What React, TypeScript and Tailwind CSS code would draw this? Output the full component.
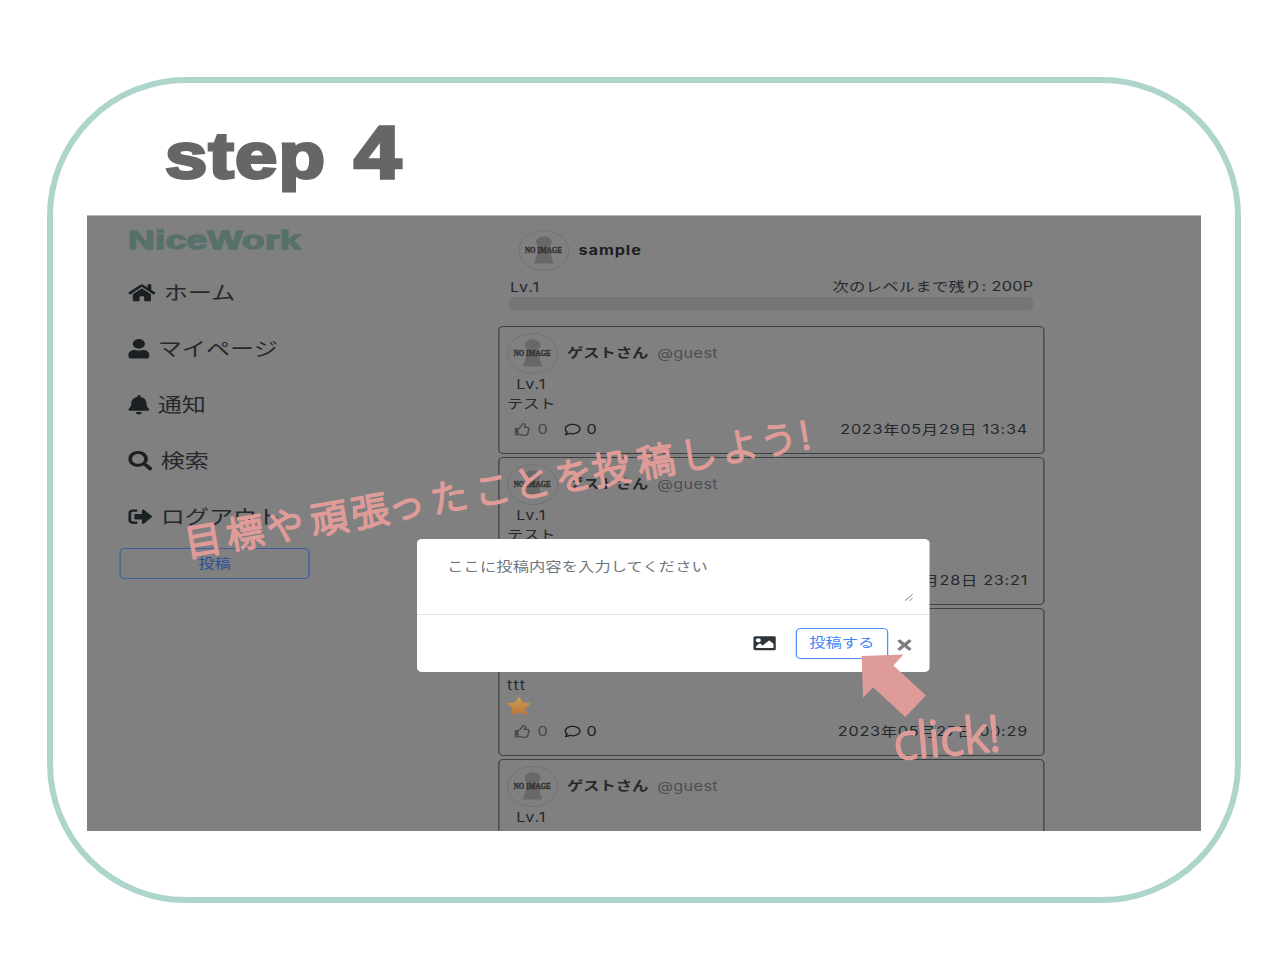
import React from "react";
import {
  FaBell,
  FaHome,
  FaImage,
  FaRegComment,
  FaRegThumbsUp,
  FaSearch,
  FaSignOutAlt,
  FaTimes,
  FaUser,
} from "react-icons/fa";

const menu = [
  { icon: FaHome, label: "ホーム", size: "w-[21.8px]" },
  { icon: FaUser, label: "マイページ", size: "w-[17px]" },
  { icon: FaBell, label: "通知", size: "w-[17px]" },
  { icon: FaSearch, label: "検索", size: "w-[19.4px]" },
  { icon: FaSignOutAlt, label: "ログアウト", size: "w-[19.4px]" },
];

type Post = { body: string; star?: boolean; tall?: boolean; date: string };

const posts: Post[] = [
  { body: "テスト", date: "2023年05月29日 13:34" },
  { body: "テスト", tall: true, date: "2023年05月28日 23:21" },
  { body: "ttt", tall: true, star: true, date: "2023年05月27日 00:29" },
  { body: "", date: "" },
];

function Avatar() {
  return (
    <svg className="size-[41px] shrink-0" viewBox="0 0 41 41">
      <circle cx="20.5" cy="20.5" r="20" fill="none" stroke="#717171" strokeWidth="0.8" />
      <ellipse cx="20.5" cy="12" rx="6.4" ry="5.8" fill="#686868" />
      <path d="M17.5 16h6l4.8 17.5H12.6z" fill="#686868" />
      <text
        x="20.2"
        y="23.4"
        textAnchor="middle"
        fontFamily="Liberation Serif, serif"
        fontWeight="700"
        fontSize="8"
        textLength="29.5"
        lengthAdjust="spacingAndGlyphs"
        fill="#303030"
        stroke="#303030"
        strokeWidth="0.35"
      >
        NO IMAGE
      </text>
    </svg>
  );
}

function Star() {
  return (
    <svg className="h-[18px] w-[19px]" viewBox="0 0 19 18">
      <defs>
        <linearGradient id="star" x1="0" y1="0" x2="0" y2="1">
          <stop offset="0" stopColor="#c9a04c" />
          <stop offset="1" stopColor="#c0743c" />
        </linearGradient>
      </defs>
      <path
        d="M9.5 1l2.5 4.9 6 .9-4.1 4.2 1.1 6-5.5-2.2L4 17l1.1-6L1 6.8l6-.9z"
        fill="url(#star)"
        stroke="url(#star)"
        strokeWidth="1.4"
        strokeLinejoin="round"
      />
    </svg>
  );
}

function PostCard({ post }: { post: Post }) {
  return (
    <article
      className={`flex shrink-0 flex-col rounded-[4px] border border-[#3f4142] px-[6.3px] pt-[6px] ${
        post.tall ? "h-[148px]" : "h-[128px]"
      }`}
    >
      <div className="flex h-[41px] items-center gap-[7px]">
        <Avatar />
        <p className="flex">
          <span className="font-bold">ゲストさん</span>
          <span className="ml-[7px] pt-px tracking-[0.3px] text-[#4b4f54]">@guest</span>
        </p>
      </div>
      <p className="pt-px pl-[7.4px] tracking-[0.7px]">Lv.1</p>
      {post.body && (
        <p className={post.star ? "-mt-px mb-px tracking-[1.1px]" : "-mt-px mb-px tracking-[-0.1px]"}>{post.body}</p>
      )}
      {post.tall && <div className="flex h-[20px] items-center">{post.star && <Star />}</div>}
      {post.date && (
        <div className="mt-[6px] flex items-center pr-[7px] pl-[6.4px]">
          <span className="flex items-center gap-[5px] text-[#45494e]">
            <FaRegThumbsUp />0
          </span>
          <span className="ml-[13px] flex items-center gap-[5px] text-[#1b1d20]">
            <FaRegComment />0
          </span>
          <time className="-mr-[0.7px] ml-auto tracking-[0.58px]">{post.date}</time>
        </div>
      )}
    </article>
  );
}

function PostDialog() {
  return (
    <div className="absolute top-[323px] left-[264.2px] flex h-[133px] w-[410px] flex-col rounded-[4px] bg-white">
      <div className="relative h-[76px] border-b border-[#dfe2e6] pt-[18px] pl-[24px] tracking-[0.08px] text-[#6c757d]">
        ここに投稿内容を入力してください
        <svg className="absolute right-[13.5px] bottom-[13px] size-[7px]" viewBox="0 0 7 7" stroke="#777" strokeWidth="0.8">
          <path d="M0.3 6.7L6.5 0.5M4 6.7L6.5 4.2" />
        </svg>
      </div>
      <div className="flex flex-1 items-center justify-end pr-[14.4px] pb-px">
        <FaImage className="h-[18.5px] w-[18.5px] text-[#2f363b]" />
        <span className="ml-[15.5px] flex h-[31px] w-[74px] items-center justify-center rounded-[4px] border border-[#4d90fd] text-[#3d84f7]">
          投稿する
        </span>
        <FaTimes className="mt-[3px] ml-[7px] h-[16px] w-[12px] text-[#7d7d7d]" />
      </div>
    </div>
  );
}

const captionX = "0 42.6 83.2 127.9 169.3 206 249.5 293.8 333.7 376.4 414.1 459.6 502.2 544.8 584 610.7";

function Handwriting() {
  return (
    <svg
      className="pointer-events-none absolute top-0 left-0 h-[977px] w-[1263px]"
      viewBox="0 0 1263 977"
      fill="#df9b98"
      stroke="#df9b98"
      strokeLinejoin="round"
    >
      <text
        transform="translate(203 540) rotate(-9.9)"
        x={captionX}
        y="14"
        textAnchor="middle"
        fontFamily="Noto Sans CJK JP, sans-serif"
        fontWeight="300"
        fontSize="37.5"
        strokeWidth="2.2"
      >
        目標や頑張ったことを投稿しよう!
      </text>
      <path stroke="none" d="M861.7 656L903.3 654.4L893.5 665.5L926 695.5L905.3 717L873 687.3L863 697.8z" />
      <text
        transform="translate(895 760) rotate(-5)"
        x="0"
        y="0"
        textLength="107"
        lengthAdjust="spacingAndGlyphs"
        fontFamily="Noto Sans, sans-serif"
        fontWeight="300"
        fontSize="50"
        strokeWidth="2"
      >
        click!
      </text>
    </svg>
  );
}

export default function App() {
  return (
    <main className="relative h-[977px] w-[1263px] overflow-hidden bg-white pt-[77px] pl-[47px] font-['Inter','Noto_Sans_CJK_JP',sans-serif]">
      <section className="h-[826px] w-[1194px] rounded-[139px] border-[6px] border-[#add5cb]">
        <h1 className="flex h-[132px] items-baseline pt-[19px] pl-[112px] font-['Liberation_Sans',sans-serif] text-[75px] leading-[100px] font-bold text-[#666]">
          <span className="w-[189px] origin-left scale-x-[1.17] text-[65px] tracking-[1px] whitespace-pre [-webkit-text-stroke:3px_#666]">
            step{" "}
          </span>
          <span className="origin-left scale-x-[1.13] [-webkit-text-stroke:3.4px_#666]">4</span>
        </h1>
        <div className="ml-[34px] h-[616px] w-[1114px] overflow-hidden border-t border-[#b4b8b7] bg-[#808080]">
          <div className="relative flex h-[616px] w-[891.2px] origin-left scale-x-125 text-[13px] leading-[19.5px] text-[#26292c]">
            <nav className="w-[328.8px] shrink-0 pt-[9px] pl-[25.6px]">
              <div className="origin-left scale-x-[1.14] pl-[6px] font-['Liberation_Sans',sans-serif] text-[26px] leading-[30px] font-bold tracking-[0.2px] text-[#57706a] [-webkit-text-stroke:1.3px_#57706a]">
                NiceWork
              </div>
              <ul className="pt-[10px] pl-[7.2px] text-[19.3px] leading-[56px]">
                {menu.map(({ icon: Icon, label, size }) => (
                  <li key={label} className="flex h-[56px] items-center gap-[6.8px]">
                    <Icon className={`h-[19.4px] shrink-0 text-[#1b2023] ${size}`} />
                    {label}
                  </li>
                ))}
              </ul>
              <div className="mt-[3px] flex h-[31px] w-[152.8px] items-center justify-center rounded-[4px] border border-[#3c5f9d] text-[#2c4f94]">
                投稿
              </div>
            </nav>
            <div className="flex w-[437.6px] shrink-0 flex-col pt-[14px]">
              <div className="flex items-center gap-[7px] pl-[16.4px]">
                <Avatar />
                <span className="pt-px font-bold tracking-[0.75px] text-[#1b1d20]">sample</span>
              </div>
              <div className="mt-[6px] flex justify-between pr-[9.2px] pl-[9.6px]">
                <span className="pt-px tracking-[0.7px]">Lv.1</span>
                <span className="tracking-[0.25px]">次のレベルまで残り: 200P</span>
              </div>
              <div className="mx-[9.6px] -mt-px h-[13px] shrink-0 rounded-[4px] bg-[#747577]" />
              <div className="mt-[16.5px] flex flex-col gap-[3px]">
                {posts.map((post, i) => (
                  <PostCard key={i} post={post} />
                ))}
              </div>
            </div>
            <PostDialog />
          </div>
        </div>
      </section>
      <Handwriting />
    </main>
  );
}
